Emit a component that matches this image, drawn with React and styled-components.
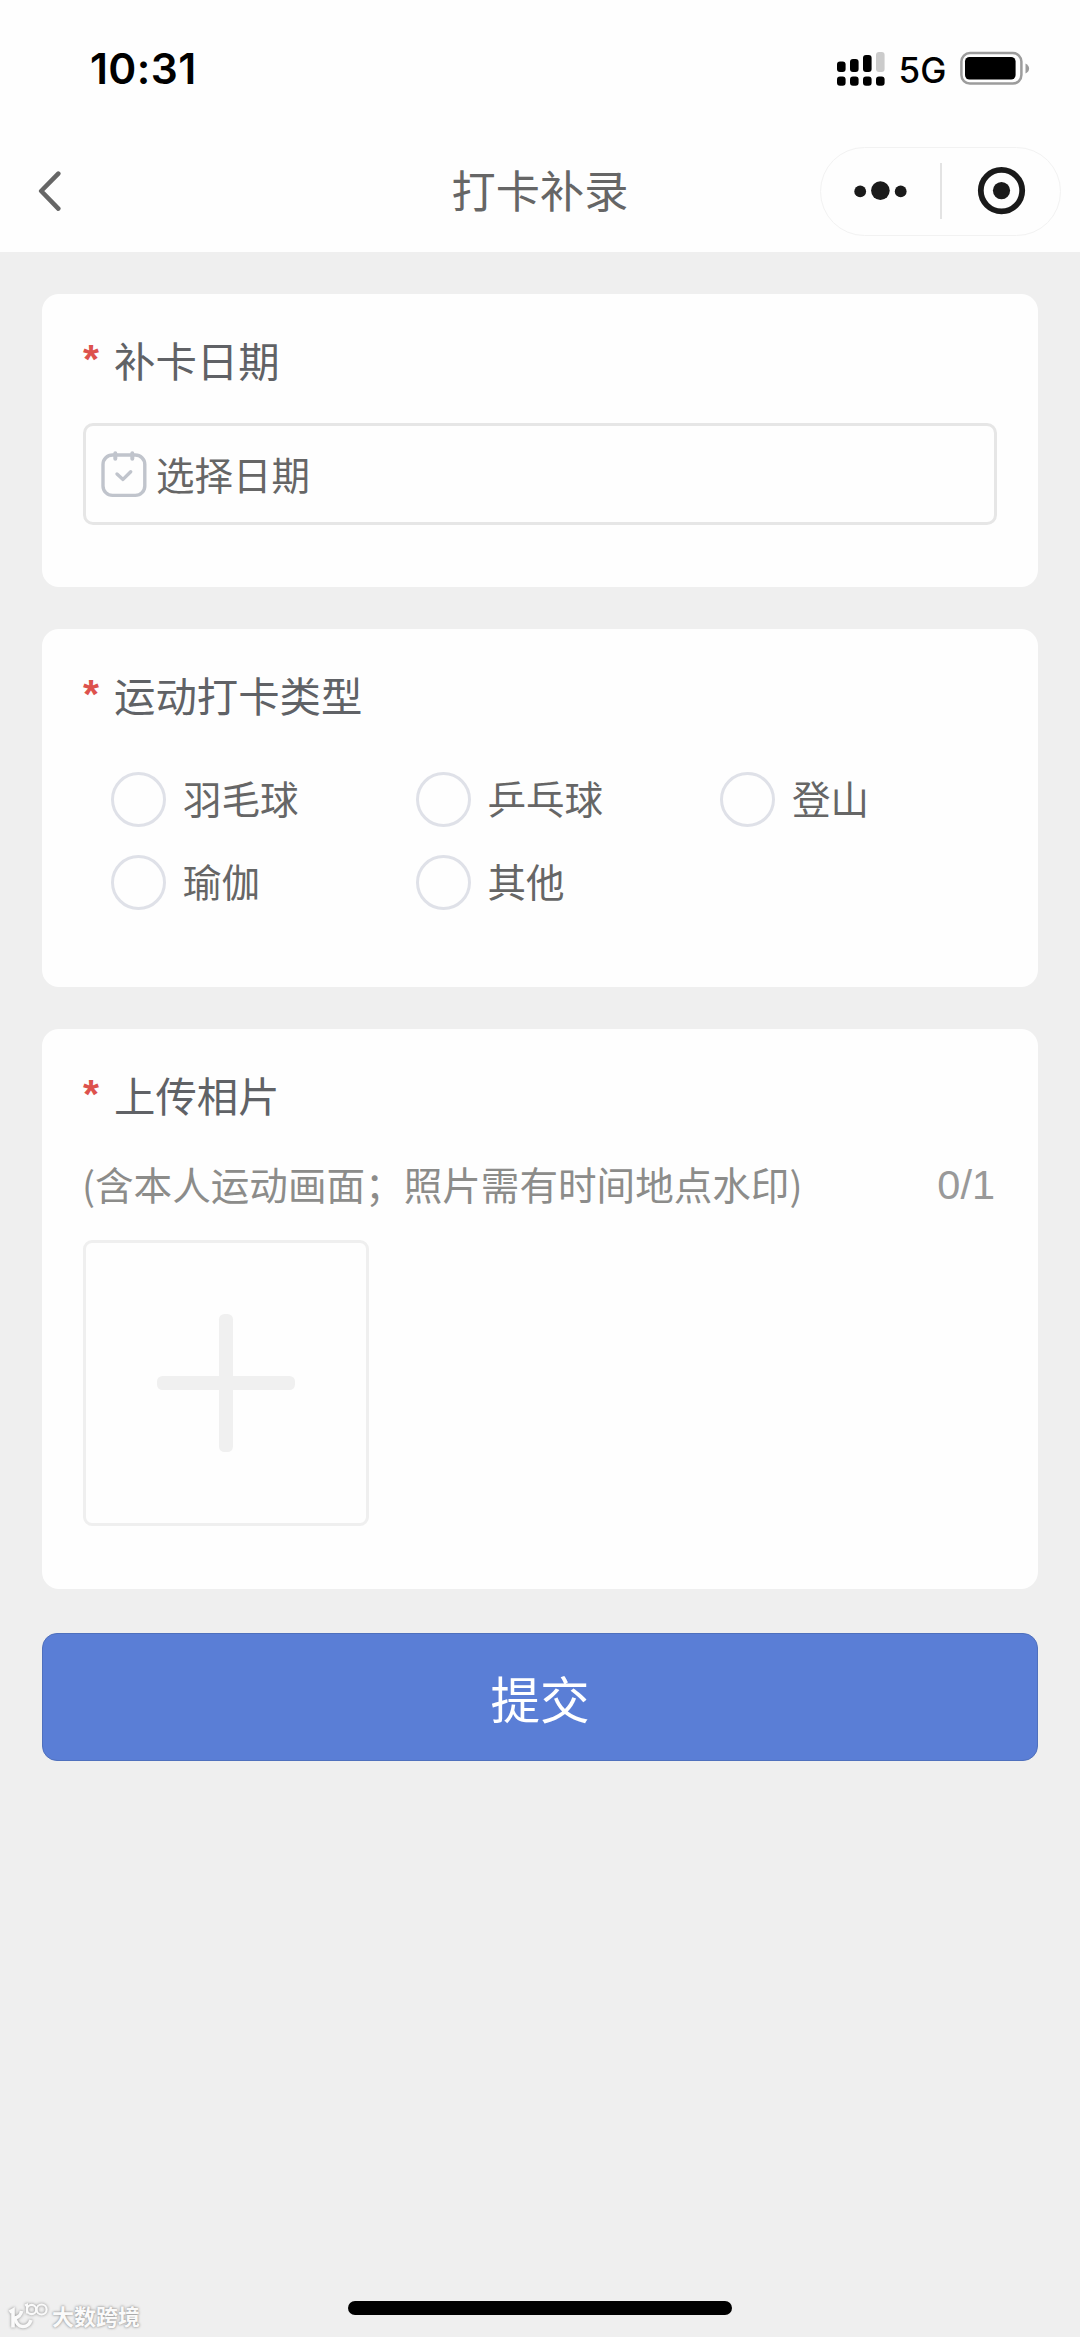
import { useState } from "react";
import styled, { createGlobalStyle } from "styled-components";

const sports = ["羽毛球", "乒乓球", "登山", "瑜伽", "其他"];

function StatusIcons() {
  return (
    <StatusRight>
      <svg width="48" height="36" viewBox="0 0 48 36">
        <rect x="0" y="11.5" width="8.6" height="10.5" rx="3" />
        <rect x="13" y="9" width="8.6" height="13" rx="3" />
        <rect x="26" y="5" width="8.6" height="17" rx="3" />
        <rect x="39" y="2" width="8.6" height="20" rx="3" fill="#cbcbcb" />
        <rect x="0" y="26.5" width="8.6" height="9.3" rx="3" />
        <rect x="13" y="26.5" width="8.6" height="9.3" rx="3" />
        <rect x="26" y="26.5" width="8.6" height="9.3" rx="3" />
        <rect x="39" y="26.5" width="8.6" height="9.3" rx="3" />
      </svg>
      <Network>5G</Network>
      <svg width="70" height="36" viewBox="0 0 70 36">
        <rect x="1.4" y="3" width="60" height="30.6" rx="8.6" fill="none" stroke="#9c9c9c" strokeWidth="2.5" />
        <rect x="5" y="7" width="50.6" height="22.6" rx="4.5" />
        <path d="M65.5 13.4 C70.3 15.4 70.3 21.4 65.5 23.4 Z" fill="#9c9c9c" />
      </svg>
    </StatusRight>
  );
}

function Capsule() {
  return (
    <CapsuleBox>
      <svg width="118" height="56" viewBox="0 0 118 56" fill="#1a1a1a">
        <circle cx="39.2" cy="28.4" r="5.9" />
        <circle cx="59.4" cy="27.6" r="9.3" />
        <circle cx="79.7" cy="28.4" r="5.9" />
      </svg>
      <CapsuleLine />
      <svg width="118" height="56" viewBox="0 0 118 56">
        <circle cx="59.5" cy="27.6" r="20.7" fill="none" stroke="#1a1a1a" strokeWidth="5.8" />
        <circle cx="59.5" cy="27.6" r="8.6" fill="#1a1a1a" />
      </svg>
    </CapsuleBox>
  );
}

function CalendarIcon() {
  return (
    <svg width="46" height="48" viewBox="0 0 46 48" fill="none" stroke="#c0c4cc" strokeLinecap="round" strokeLinejoin="round">
      <rect x="2" y="5" width="41.8" height="40.4" rx="9.5" strokeWidth="3.4" />
      <path d="M14.3 3.2 V8.8 M31.3 3.2 V8.8" strokeWidth="4" />
      <path d="M16 24 L22 29.4 L29.7 21.8" strokeWidth="3.4" />
    </svg>
  );
}

function App() {
  const [selected, setSelected] = useState("");

  return (
    <Page>
      <GlobalStyle />
      <StatusBar>
        <Time>10:31</Time>
        <StatusIcons />
      </StatusBar>
      <NavBar>
        <svg width="24" height="44" viewBox="0 0 24 44" fill="none" stroke="#666" strokeWidth="4.6" strokeLinecap="round">
          <path d="M20.3 4.6 L3.2 22 L20.3 39.6" strokeLinejoin="round" />
        </svg>
        <NavTitle>打卡补录</NavTitle>
        <Capsule />
      </NavBar>
      <Form>
        <Card $height={293}>
          <Label><Star>*</Star>补卡日期</Label>
          <DateInput>
            <CalendarIcon />
            <DateText>选择日期</DateText>
          </DateInput>
        </Card>
        <Card $height={358}>
          <Label><Star>*</Star>运动打卡类型</Label>
          <Options>
            {sports.map((sport) => (
              <Option key={sport} onClick={() => setSelected(sport)}>
                <Radio $checked={selected === sport} />
                <OptionText>{sport}</OptionText>
              </Option>
            ))}
          </Options>
        </Card>
        <Card $height={560}>
          <Label><Star>*</Star>上传相片</Label>
          <Hint>
            <HintText>(含本人运动画面；照片需有时间地点水印)</HintText>
            <Counter>0/1</Counter>
          </Hint>
          <Upload>
            <svg width="140" height="140" viewBox="0 0 140 140" fill="#f0f0f0">
              <rect x="1" y="63" width="138" height="14" rx="5.5" />
              <rect x="63" y="1" width="14" height="138" rx="5.5" />
            </svg>
          </Upload>
        </Card>
        <Submit>提交</Submit>
      </Form>
      <Footer>
        <Watermark>
          <svg width="42" height="30" viewBox="0 0 42 30" fill="none" stroke="#fafafa" strokeWidth="3.6">
            <path d="M1.5 12 L5 10 V27.5" />
            <path d="M13.5 11 C13 15 10 17.5 7 18 C9 29 20 29 23 20" />
            <path d="M17 5.5 L19 4.5 V13.5" strokeWidth="2" />
            <circle cx="23.6" cy="9.5" r="4.6" strokeWidth="2.2" />
            <circle cx="33.6" cy="9.5" r="5" strokeWidth="2.2" />
          </svg>
          <span>大数跨境</span>
        </Watermark>
        <HomeBar />
      </Footer>
    </Page>
  );
}

export default App;

const GlobalStyle = createGlobalStyle`
  * {
    box-sizing: border-box;
  }

  body {
    margin: 0;
    background-color: #efefef;
    font-family: "Noto Sans CJK SC", sans-serif;
  }

  svg {
    display: block;
    flex-shrink: 0;
  }
`;

const Page = styled.div`
  display: flex;
  flex-direction: column;
  width: 1080px;
  height: 2337px;
  overflow: hidden;
  background-color: #efefef;
`;

const StatusBar = styled.div`
  display: flex;
  justify-content: space-between;
  align-items: center;
  height: 136px;
  padding: 0 50px 0 90px;
  background-color: #fefefe;
`;

const Time = styled.span`
  padding-top: 1px;
  font-family: Inter, sans-serif;
  font-size: 42.5px;
  font-weight: 600;
  letter-spacing: 0.4px;
  color: #000;
`;

const StatusRight = styled.div`
  display: flex;
  align-items: center;
`;

const Network = styled.span`
  width: 75px;
  padding-top: 3px;
  text-align: center;
  font-family: Inter, sans-serif;
  font-size: 35px;
  font-weight: 500;
  color: #000;
`;

const NavBar = styled.div`
  display: grid;
  grid-template-columns: 241px 1fr 241px;
  align-items: center;
  height: 116px;
  padding: 0 19px 6px 38px;
  background-color: #fefefe;
`;

const NavTitle = styled.div`
  padding: 0 19px 4px 0;
  text-align: center;
  font-size: 44.2px;
  line-height: 60px;
  color: #666;
`;

const CapsuleBox = styled.div`
  display: flex;
  align-items: center;
  justify-content: space-between;
  height: 89px;
  border: 1.5px solid #f2f2f2;
  border-radius: 45px;
`;

const CapsuleLine = styled.div`
  width: 2px;
  height: 56px;
  background-color: #e3e3e3;
`;

const Form = styled.div`
  display: flex;
  flex-direction: column;
  gap: 42px;
  padding: 42px 42px 0;
`;

const Card = styled.div`
  height: ${(props) => props.$height}px;
  padding: 35px 41px 0;
  background-color: #fefefe;
  border-radius: 17px;
`;

const Label = styled.div`
  display: flex;
  font-size: 41.4px;
  line-height: 60px;
  color: #606266;
`;

const Star = styled.span`
  width: 31px;
  font-family: "Liberation Sans", sans-serif;
  font-size: 41px;
  font-weight: 700;
  color: #dd524d;
`;

const DateInput = styled.div`
  display: flex;
  align-items: center;
  gap: 9px;
  height: 102px;
  margin-top: 34px;
  padding: 0 15px;
  border: 3px solid #e6e6e6;
  border-radius: 10px;
`;

const DateText = styled.span`
  padding-bottom: 3px;
  font-size: 38.5px;
  line-height: 56px;
  color: #666;
`;

const Options = styled.div`
  display: grid;
  grid-template-columns: repeat(3, 304.5px);
  row-gap: 28px;
  margin: 48px 0 0 28px;
`;

const Option = styled.div`
  display: flex;
  align-items: center;
  gap: 17px;
  height: 55px;
`;

const OptionText = styled.span`
  padding-bottom: 5px;
  font-size: 38.5px;
  line-height: 50px;
  color: #666;
`;

const Radio = styled.span`
  width: 55px;
  height: 55px;
  border: 3px solid #dfe1e8;
  border-radius: 50%;
  background-color: ${(props) => (props.$checked ? "#5a7ed6" : "transparent")};
`;

const Hint = styled.div`
  display: flex;
  justify-content: space-between;
  height: 56px;
  margin-top: 31px;
  line-height: 56px;
`;

const HintText = styled.span`
  margin-left: -1px;
  font-size: 38.6px;
  color: #8c8c8a;
`;

const Counter = styled.span`
  margin-right: 2px;
  font-family: "Liberation Sans", sans-serif;
  font-size: 41.5px;
  line-height: 59px;
  color: #999;
`;

const Upload = styled.div`
  display: flex;
  align-items: center;
  justify-content: center;
  width: 286px;
  height: 286px;
  margin-top: 29px;
  border: 3px solid #efefef;
  border-radius: 9px;
`;

const Submit = styled.button`
  height: 128px;
  margin-top: 2px;
  padding: 0;
  border: 1.5px solid #4f70bd;
  border-radius: 15px;
  background-color: #5a7ed6;
  font-family: inherit;
  font-size: 49.6px;
  color: #fff;
`;

const Footer = styled.div`
  display: grid;
  grid-template-columns: 348px 384px 1fr;
  align-items: end;
  margin-top: auto;
  padding-bottom: 7px;
`;

const Watermark = styled.div`
  display: flex;
  align-items: center;
  gap: 2px;
  padding-left: 8px;
  font-size: 22px;
  line-height: 30px;
  font-weight: 700;
  color: #fafafa;
  text-shadow: 0 0 3px #999, 0 0 2px #aaa;

  svg {
    filter: drop-shadow(0 0 1.5px #888);
  }
`;

const HomeBar = styled.div`
  height: 14px;
  margin-bottom: 15px;
  border-radius: 7px;
  background-color: #000;
`;
